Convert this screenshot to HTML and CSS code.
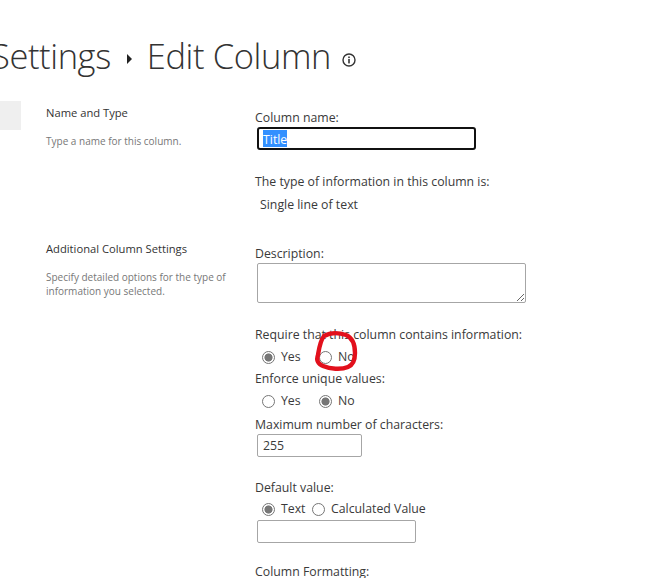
FILE: index.html
```html
<!DOCTYPE html>
<html lang="en">
<head>
<meta charset="utf-8">
<title>Edit Column</title>
<link rel="stylesheet" href="styles.css">
</head>
<body>
<header class="title-row">
  <h1 class="title">Settings</h1>
  <span class="crumb-arrow"></span>
  <h1 class="title">Edit Column</h1>
  <svg class="info" width="16" height="16" viewBox="0 0 16 16" aria-hidden="true">
    <circle cx="8" cy="8" r="6" fill="none" stroke="#333" stroke-width="1.4"/>
    <rect x="7.2" y="7" width="1.6" height="4.4" fill="#333"/>
    <rect x="7.2" y="4.5" width="1.6" height="1.6" fill="#333"/>
  </svg>
</header>
<main class="layout">
  <div class="side"><div class="side-box"></div></div>
  <div class="sections">
    <section class="section section-first">
      <div class="intro">
        <h2 class="intro-title">Name and Type</h2>
        <p class="intro-text">Type a name for this column.</p>
      </div>
      <div class="fields">
        <div class="label">Column name:</div>
        <div class="name-input"><span class="selected">Title</span></div>
        <div class="label type-label">The type of information in this column is:</div>
        <div class="label type-value">Single line of text</div>
      </div>
    </section>
    <section class="section">
      <div class="intro">
        <h2 class="intro-title">Additional Column Settings</h2>
        <p class="intro-text">Specify detailed options for the type of information you selected.</p>
      </div>
      <div class="fields">
        <label class="label">Description:</label>
        <textarea class="text-area"></textarea>
        <div class="label require-label">Require that this column contains information:</div>
        <div class="radio-row">
          <label class="radio-item radio-wide"><input class="radio" type="radio" name="req" checked>Yes</label>
          <label class="radio-item"><input class="radio" type="radio" name="req">No</label>
        </div>
        <div class="label">Enforce unique values:</div>
        <div class="radio-row">
          <label class="radio-item radio-wide"><input class="radio" type="radio" name="uniq">Yes</label>
          <label class="radio-item"><input class="radio" type="radio" name="uniq" checked>No</label>
        </div>
        <div class="label max-label">Maximum number of characters:</div>
        <input class="text-input input-max" type="text" value="255">
        <div class="label default-label">Default value:</div>
        <div class="radio-row radio-row-default">
          <label class="radio-item radio-text"><input class="radio" type="radio" name="def" checked>Text</label>
          <label class="radio-item"><input class="radio" type="radio" name="def">Calculated Value</label>
        </div>
        <input class="text-input input-default" type="text">
        <div class="label format-label">Column Formatting:</div>
      </div>
    </section>
  </div>
</main>
<svg class="scribble" width="653" height="578" viewBox="0 0 653 578" aria-hidden="true">
  <path d="M324 336 C331 332 340 333 346 335 C353 338 355 345 355 353 C355 360 353 365 348 367 C341 370 330 369 323 366 C318 364 316 360 318 355 C319 349 320 341 324 336 Z" fill="none" stroke="#e2101c" stroke-width="4.4" stroke-linejoin="round"/>
</svg>
</body>
</html>
```
FILE: styles.css
```css
* { box-sizing: border-box; }
html, body { margin: 0; padding: 0; }
body {
  width: 653px;
  height: 578px;
  overflow: hidden;
  position: relative;
  background: #fff;
  color: #3a3a3a;
  font-family: "Open Sans", "Noto Sans", "Liberation Sans", sans-serif;
  font-size: 12.3px;
}
.title-row {
  display: flex;
  align-items: center;
  height: 104px;
  padding-top: 8px;
  margin-left: -9px;
}
.title {
  margin: 0;
  font-size: 34.5px;
  font-weight: 300;
  line-height: 46px;
  color: #333;
  letter-spacing: -0.4px;
}
.crumb-arrow {
  width: 0;
  height: 0;
  margin: 6px 15px 0 16px;
  border-left: 5px solid #222;
  border-top: 5px solid transparent;
  border-bottom: 5px solid transparent;
}
.info { margin: 8px 0 0 10px; }
.layout { display: flex; }
.side { width: 46px; flex: none; }
.side-box { width: 21px; height: 29px; margin-top: -3px; background: #efefef; }
.sections { flex: 1; }
.section { display: flex; }
.section-first { height: 136px; }
.intro { width: 209px; flex: none; }
.intro-title {
  margin: 0;
  font-size: 11.2px;
  font-weight: 400;
  line-height: 18px;
  color: #333;
}
.intro-text {
  margin: 12px 0 0;
  width: 190px;
  font-size: 10px;
  line-height: 14px;
  color: #777;
}
.fields { padding-top: 5px; display: flex; flex-direction: column; align-items: flex-start; }
.label { display: block; line-height: 18px; font-size: 12.3px; color: #3a3a3a; white-space: nowrap; }
.name-input {
  width: 219px;
  height: 23px;
  margin: 0 0 0 2px;
  padding: 1px 0 0 4px;
  border: 2px solid #111;
  border-radius: 3px;
  background: #fff;
  line-height: 17px;
}
.selected { display: inline-block; background: #3390ff; color: #fff; padding-top: 1px; height: 17px; line-height: 17px; }
.type-label { margin-top: 23px; }
.type-value { margin: 5px 0 0 5px; }
.text-area {
  display: block;
  width: 269px;
  height: 40px;
  margin: 0 0 0 2px;
  border: 1px solid #a6a6a6;
  border-radius: 2px;
  background: #fff;
  font: inherit;
}
.require-label { margin-top: 23px; }
.radio-row { display: flex; height: 20px; margin: 3px 0 3px 7px; align-items: center; }
.radio-row-default { margin: 2px 0 1px 7px; }
.radio-item { display: flex; align-items: center; font-size: 12.3px; line-height: 18px; }
.radio-wide { width: 57px; }
.radio-text { width: 50px; }
.radio {
  appearance: none;
  width: 13px;
  height: 13px;
  margin: 0 6px 0 0;
  border: 1px solid #767676;
  border-radius: 50%;
  background: #fff;
}
.radio:checked { background: radial-gradient(circle, #777 0 3.7px, #fff 4.4px); }
.max-label { margin-top: 2px; }
.text-input {
  display: block;
  height: 23px;
  margin: 0 0 0 2px;
  padding: 0 5px;
  border: 1px solid #a6a6a6;
  border-radius: 2px;
  background: #fff;
  color: #3a3a3a;
  font: inherit;
}
.input-max { width: 105px; }
.input-default { width: 159px; }
.default-label { margin-top: 22px; }
.format-label { margin-top: 20px; }
.scribble { position: absolute; left: 0; top: 0; pointer-events: none; }
```
